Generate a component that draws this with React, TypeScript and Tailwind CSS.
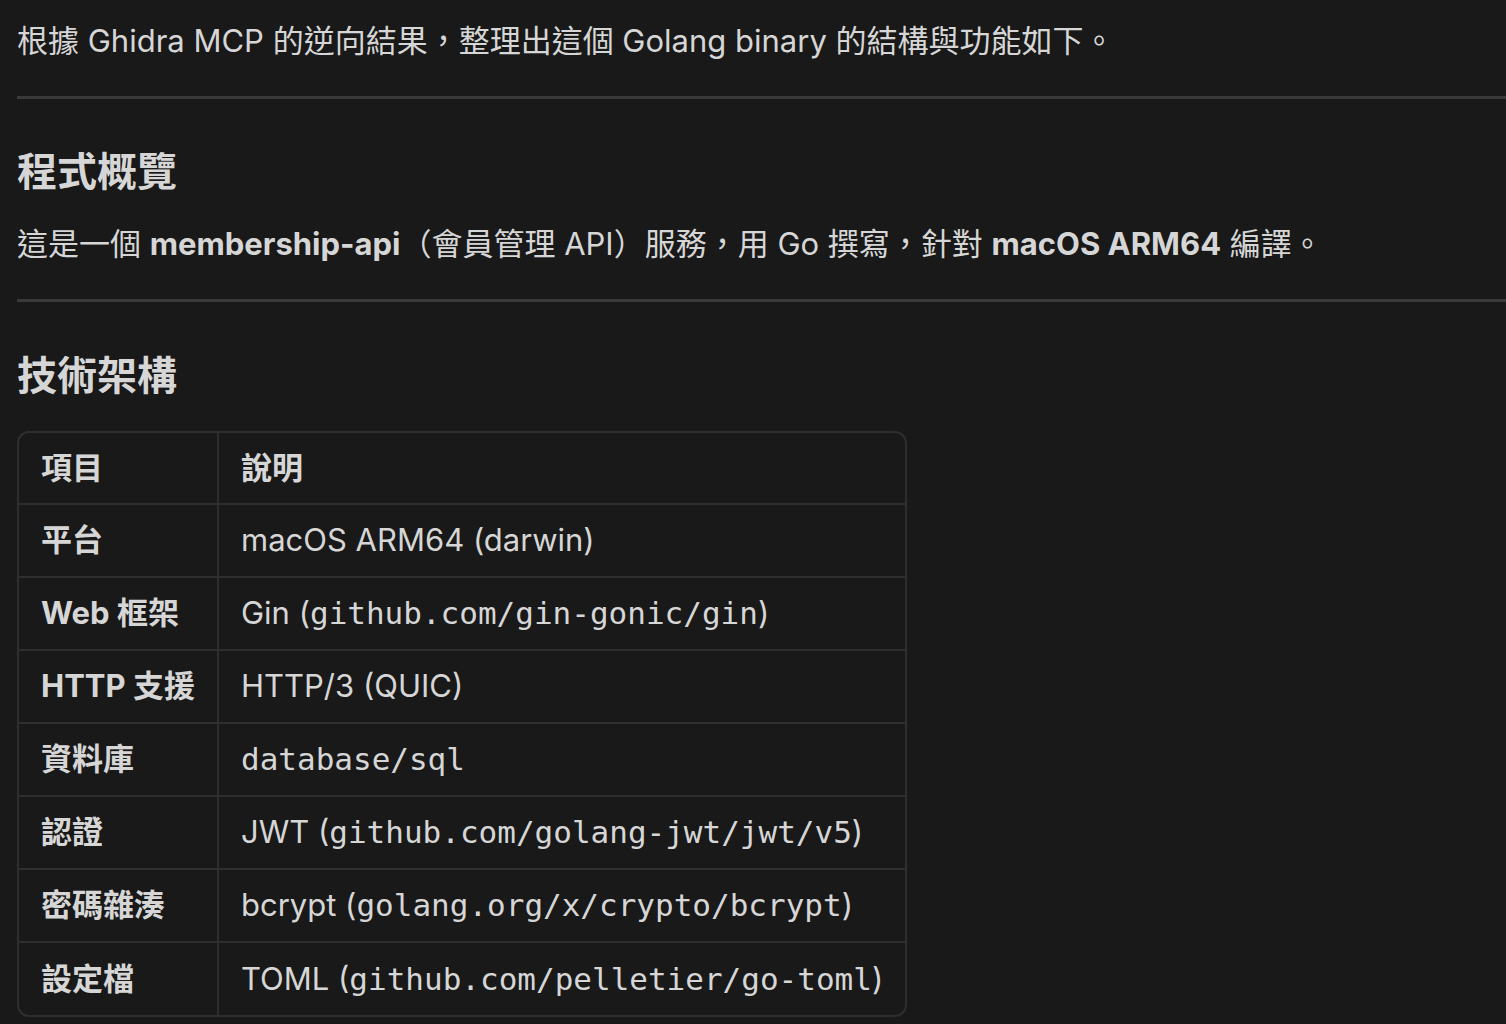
const sans = "font-['Inter','Noto_Sans_CJK_TC',sans-serif]";

const rows: { k: string; v: React.ReactNode }[] = [
  { k: '平台', v: 'macOS ARM64 (darwin)' },
  { k: 'Web 框架', v: <>Gin (<Code>github.com/gin-gonic/gin</Code>)</> },
  { k: 'HTTP 支援', v: 'HTTP/3 (QUIC)' },
  { k: '資料庫', v: <Code>database/sql</Code> },
  { k: '認證', v: <>JWT (<Code>github.com/golang-jwt/jwt/v5</Code>)</> },
  { k: '密碼雜湊', v: <>bcrypt (<Code>golang.org/x/crypto/bcrypt</Code>)</> },
  { k: '設定檔', v: <>TOML (<Code>github.com/pelletier/go-toml</Code>)</> },
];

function Code({ children }: { children: React.ReactNode }) {
  return <code className="font-['DejaVu_Sans_Mono',monospace] text-[31px]">{children}</code>;
}

function Rule() {
  return <hr className="border-0 h-[3px] bg-[#3a3a3a]" />;
}

export default function App() {
  return (
    <div className={`min-h-screen bg-[#191919] text-[#d6d6d6] pl-[17px] pt-[17px] overflow-hidden ${sans}`}>
      <p className="text-[31px] leading-[48px] whitespace-nowrap">
        根據 Ghidra MCP 的逆向結果，整理出這個 Golang binary 的結構與功能如下。
      </p>

      <div className="mt-[31px]"><Rule /></div>

      <h2 className="mt-[48px] text-[40px] leading-[50px] font-bold">程式概覽</h2>
      <p className="mt-[23px] text-[31px] leading-[48px] whitespace-nowrap">
        這是一個 <strong className="font-bold">membership-api</strong>（會員管理 API）服務，用 Go 撰寫，針對 <strong className="font-bold">macOS ARM64</strong> 編譯。
      </p>

      <div className="mt-[31px]"><Rule /></div>

      <h2 className="mt-[49px] text-[40px] leading-[50px] font-bold">技術架構</h2>

      <div className="mt-[30px] w-[890px] border-2 border-[#2e2e2e] rounded-[12px] overflow-hidden">
        <table className="w-full border-collapse text-[31px]">
          <thead>
            <tr>
              <th className="w-[198px] text-left font-bold px-[22px] h-[71px] border-r-2 border-[#2e2e2e]">項目</th>
              <th className="text-left font-bold px-[22px] h-[71px]">說明</th>
            </tr>
          </thead>
          <tbody>
            {rows.map((r) => (
              <tr key={r.k} className="border-t-2 border-[#2e2e2e]">
                <td className="font-bold px-[22px] h-[73px] border-r-2 border-[#2e2e2e] whitespace-nowrap">{r.k}</td>
                <td className="px-[22px] h-[73px] whitespace-nowrap">{r.v}</td>
              </tr>
            ))}
          </tbody>
        </table>
      </div>
    </div>
  );
}
